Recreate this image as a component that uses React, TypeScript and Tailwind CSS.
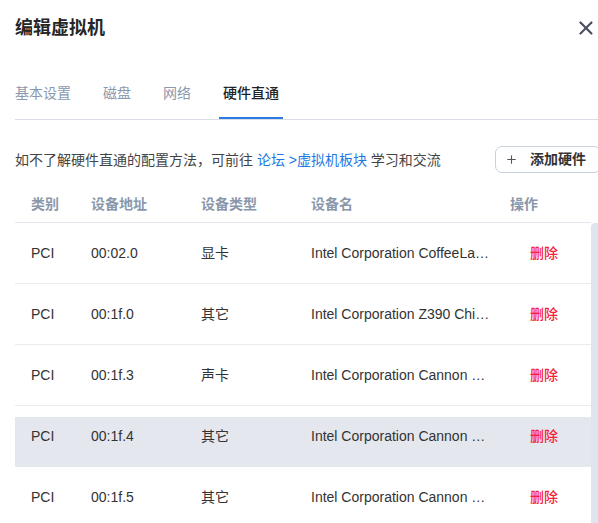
import React, { useState } from 'react';
import { X, Plus } from 'lucide-react';

type Device = {
  kind: string;
  addr: string;
  type: string;
  name: string;
};

const DEVICES: Device[] = [
  { kind: 'PCI', addr: '00:02.0', type: '显卡', name: 'Intel Corporation CoffeeLake-S GT2 [UHD Graphics 630]' },
  { kind: 'PCI', addr: '00:1f.0', type: '其它', name: 'Intel Corporation Z390 Chipset LPC/eSPI Controller' },
  { kind: 'PCI', addr: '00:1f.3', type: '声卡', name: 'Intel Corporation Cannon Lake PCH cAVS' },
  { kind: 'PCI', addr: '00:1f.4', type: '其它', name: 'Intel Corporation Cannon Lake PCH SMBus Controller' },
  { kind: 'PCI', addr: '00:1f.5', type: '其它', name: 'Intel Corporation Cannon Lake PCH SPI Controller' },
];

const TABS = ['基本设置', '磁盘', '网络', '硬件直通'];

const App: React.FC = () => {
  const [activeTab, setActiveTab] = useState(3);
  const [hovered] = useState(3);

  return (
    <div
      className="w-[598px] h-[523px] overflow-hidden bg-white text-[#333] pl-[15px]"
      style={{ fontFamily: '"Liberation Sans", "Noto Sans CJK SC", sans-serif' }}
    >
      {/* Header */}
      <div className="flex items-center justify-between pt-4">
        <h2 className="text-[18px] leading-6 font-bold text-[#262626]">编辑虚拟机</h2>
        <button className="w-6 h-6 flex items-center justify-center text-[#4a5060]">
          <X size={22} strokeWidth={2.4} />
        </button>
      </div>

      {/* Tabs */}
      <div className="mt-[43px] border-b border-[#d9dee6]">
        <div className="flex gap-6 -ml-1">
          {TABS.map((tab, i) => (
            <button
              key={tab}
              onClick={() => setActiveTab(i)}
              className={`px-1 pb-[14px] text-[14px] leading-5 border-b-2 ${
                activeTab === i
                  ? 'border-[#2a7ae2] text-[#222] font-medium'
                  : 'border-transparent text-[#8a98ae]'
              }`}
            >
              {tab}
            </button>
          ))}
        </div>
      </div>

      {/* Info row */}
      <div className="mt-[26px] flex items-center justify-between">
        <p className="text-[14px] leading-5 text-[#444]">
          如不了解硬件直通的配置方法，可前往 <span className="text-[#1e78e4]">论坛 &gt;虚拟机板块</span> 学习和交流
        </p>
        <button className="w-[106px] -mr-[3px] h-[27px] shrink-0 flex items-center gap-3 pl-[9px] rounded-[7px] border border-[#c8d1dd] text-[14px] font-bold text-[#333]">
          <Plus size={13} strokeWidth={2} className="text-[#555]" />
          添加硬件
        </button>
      </div>

      {/* Table */}
      <div className="mt-[13px] w-[576px]">
        <div className="flex h-[37px] items-center border-b border-[#e3e7ed] text-[14px] font-bold text-[#8a97ab]">
          <div className="w-[60px] pl-4">类别</div>
          <div className="w-[110px] pl-4">设备地址</div>
          <div className="w-[110px] pl-4">设备类型</div>
          <div className="w-[199px] pl-4">设备名</div>
          <div className="flex-1 pl-4">操作</div>
        </div>
      </div>

      <div className="flex">
        <div className="w-[576px]">
          {DEVICES.map((d, i) => (
            <div
              key={d.addr}
              className={`flex h-[61px] items-center border-b text-[14px] ${
                hovered === i
                  ? 'bg-[linear-gradient(to_bottom,transparent_11px,#e4e7ee_11px)] border-[#e4e7ee]'
                  : 'border-[#e8ebf0]'
              }`}
            >
              <div className="w-[60px] pl-4">{d.kind}</div>
              <div className="w-[110px] pl-4">{d.addr}</div>
              <div className="w-[110px] pl-4">{d.type}</div>
              <div className="w-[199px] pl-4 pr-[3px]">
                <div className="truncate">{d.name}</div>
              </div>
              <div className="flex-1 pl-9">
                <button className="text-[#f5213a] font-medium">删除</button>
              </div>
            </div>
          ))}
        </div>
        <div className="w-[7px] h-[320px] bg-[#dfe5ee] rounded-tl-[4px]" />
      </div>
    </div>
  );
};

export default App;
